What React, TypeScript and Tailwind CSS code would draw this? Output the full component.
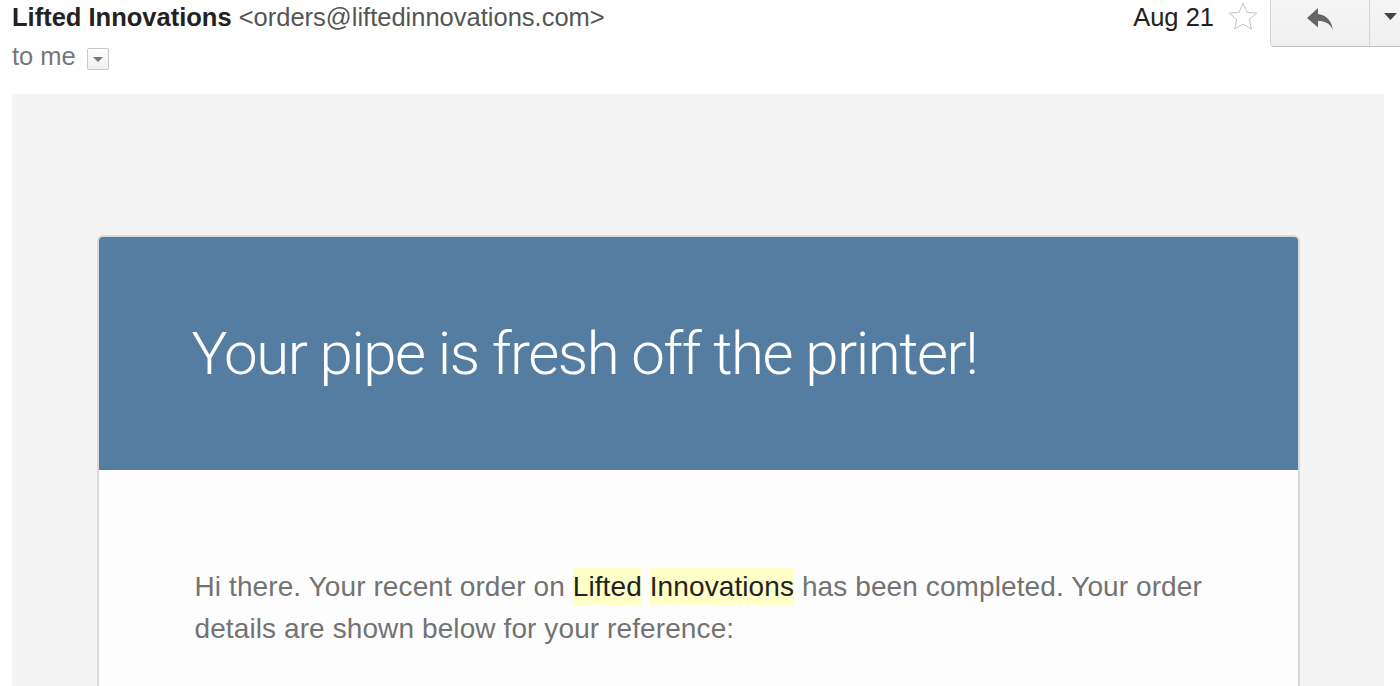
import React from "react";

//gmail-style message header + woocommerce order email
export default function App() {
  return (
    <div className="w-[1400px] h-[686px] overflow-hidden bg-white font-['Liberation_Sans',Arial,sans-serif]">
      {/* message header row */}
      <div className="flex justify-between h-[94px]">
        <div className="pl-[12px] pt-[2px] text-[25.5px] leading-[30px]">
          <div className="whitespace-nowrap">
            <span className="font-bold text-[#222]">Lifted Innovations</span>{" "}
            <span className="text-[#555]">&lt;orders@liftedinnovations.com&gt;</span>
          </div>
          <div className="flex items-start mt-[9px]">
            <span className="text-[#777]">to me</span>
            <span className="ml-[11px] mt-[7px] w-[22px] h-[22px] flex items-center justify-center rounded-[2px] border border-[#c8c8c8] bg-gradient-to-b from-[#fdfdfd] to-[#f1f1f1]">
              <svg width="10" height="5" viewBox="0 0 10 5">
                <path d="M0 0h10L5 5z" fill="#777" />
              </svg>
            </span>
          </div>
        </div>

        <div className="flex items-start">
          <span className="pt-[2px] text-[25.5px] leading-[30px] text-[#222] whitespace-nowrap">Aug 21</span>
          <svg className="ml-[14px] mt-[2px]" width="30" height="29" viewBox="0 0 30 29">
            <path
              d="M15 1.2l3.9 9.1 9.8.8-7.5 6.4 2.3 9.6L15 22l-8.5 5.1 2.3-9.6-7.5-6.4 9.8-.8z"
              fill="none"
              stroke="#c4c4c4"
              strokeWidth="1"
              strokeLinejoin="round"
            />
          </svg>
          {/* reply button group, runs off the right edge */}
          <div className="ml-[12px] -mt-[2px] h-[49px] flex shrink-0 border border-r-0 border-[#d4d4d4] border-b-[#c4c4c4] rounded-bl-[4px] bg-gradient-to-b from-[#f6f6f6] to-[#f0f0f0]">
            <div className="w-[98px] flex justify-center pt-[9px]">
              <svg width="27" height="22" viewBox="0 0 27 22">
                <path d="M11 6V0L0 10l11 9.5V13c7 0 12 2.5 15 9-1.2-8-5.5-15-15-16z" fill="#666" />
              </svg>
            </div>
            <div className="w-[31px] border-l border-[#d4d4d4] pl-[14px] pt-[14px]">
              <svg width="13" height="7" viewBox="0 0 13 7">
                <path d="M0 0h13L6.5 7z" fill="#444" />
              </svg>
            </div>
          </div>
        </div>
      </div>

      {/* email body wrapper */}
      <div className="ml-[12px] mr-[16px] bg-[#f4f4f4] pt-[141px] pb-[140px]">
        <div className="w-[1203px] mx-auto border-2 border-[#d9d9d9] rounded-[6px] overflow-hidden bg-[#fdfdfd]">
          <div className="bg-[#557da1] px-[93px] pt-[72px] pb-[71px]">
            <h1 className="font-['Roboto',sans-serif] font-light text-white text-[60px] leading-[90px] tracking-[-1.5px] whitespace-nowrap">
              Your pipe is fresh off the printer!
            </h1>
          </div>
          <div className="px-[96px] pt-[96px] pb-[96px]">
            <p className="text-[28px] leading-[42px] tracking-[0.1px] text-[#737373] whitespace-nowrap">
              Hi there. Your recent order on{" "}
              <span className="bg-[#ffffc8] text-[#222] py-[3px]">Lifted</span>{" "}
              <span className="bg-[#ffffc8] text-[#222] py-[3px]">Innovations</span> has been completed. Your order
              <br />
              details are shown below for your reference:
            </p>
          </div>
        </div>
      </div>
    </div>
  );
}
